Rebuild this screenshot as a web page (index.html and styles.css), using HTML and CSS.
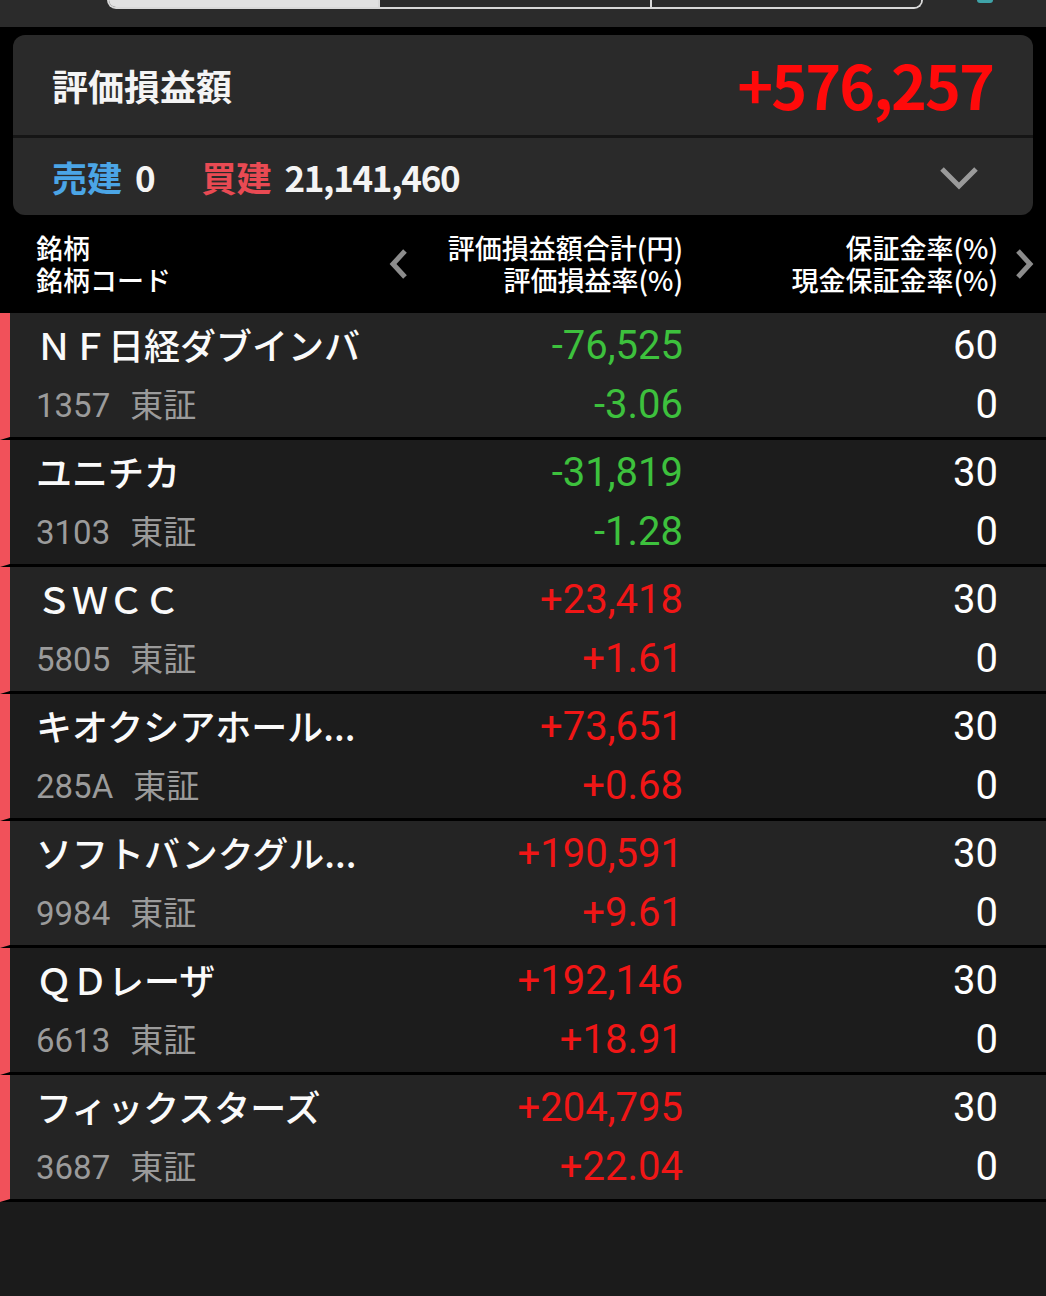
FILE: index.html
```html
<!DOCTYPE html>
<html lang="ja">
<head>
<meta charset="utf-8">
<title>建玉一覧</title>
<link rel="stylesheet" href="styles.css">
</head>
<body>
<div class="topbar">
  <div class="segments">
    <div class="seg seg-active"></div>
    <div class="seg"></div>
    <div class="seg"></div>
  </div>
  <div class="topicon"></div>
</div>
<div class="upper">
  <div class="card">
    <div class="card-top">
      <span class="card-label">評価損益額</span>
      <span class="card-total">+576,257</span>
    </div>
    <div class="card-bottom">
      <div class="pos">
        <span class="sell">売建</span><span class="pos-num">0</span>
        <span class="buy">買建</span><span class="pos-num">21,141,460</span>
      </div>
      <svg class="chev-down" width="40" height="24" viewBox="0 0 40 24"><path d="M3 3 L20 20 L37 3" fill="none" stroke="#9a9a9a" stroke-width="5" stroke-linejoin="miter"/></svg>
    </div>
  </div>
  <div class="thead">
    <div class="th th-name">
      <div class="th-lines"><div>銘柄</div><div>銘柄コード</div></div>
      <svg class="chev" width="20" height="30" viewBox="0 0 20 30"><path d="M16 2 L4 15 L16 28" fill="none" stroke="#8c8c8c" stroke-width="5"/></svg>
    </div>
    <div class="th th-r"><div>評価損益額合計(円)</div><div>評価損益率(%)</div></div>
    <div class="th th-r"><div>保証金率(%)</div><div>現金保証金率(%)</div></div>
    <div class="th th-next">
      <svg class="chev" width="20" height="30" viewBox="0 0 20 30"><path d="M4 2 L16 15 L4 28" fill="none" stroke="#8c8c8c" stroke-width="5"/></svg>
    </div>
  </div>
</div>
<div class="list">
  <div class="row">
    <div class="cell-name"><div class="name">ＮＦ日経ダブインバ</div><div class="code">1357<span class="mkt">東証</span></div></div>
    <div class="cell-num minus"><div>-76,525</div><div>-3.06</div></div>
    <div class="cell-num"><div>60</div><div>0</div></div>
  </div>
  <div class="row">
    <div class="cell-name"><div class="name">ユニチカ</div><div class="code">3103<span class="mkt">東証</span></div></div>
    <div class="cell-num minus"><div>-31,819</div><div>-1.28</div></div>
    <div class="cell-num"><div>30</div><div>0</div></div>
  </div>
  <div class="row">
    <div class="cell-name"><div class="name">ＳＷＣＣ</div><div class="code">5805<span class="mkt">東証</span></div></div>
    <div class="cell-num plus"><div>+23,418</div><div>+1.61</div></div>
    <div class="cell-num"><div>30</div><div>0</div></div>
  </div>
  <div class="row">
    <div class="cell-name"><div class="name">キオクシアホール...</div><div class="code">285A<span class="mkt">東証</span></div></div>
    <div class="cell-num plus"><div>+73,651</div><div>+0.68</div></div>
    <div class="cell-num"><div>30</div><div>0</div></div>
  </div>
  <div class="row">
    <div class="cell-name"><div class="name">ソフトバンクグル...</div><div class="code">9984<span class="mkt">東証</span></div></div>
    <div class="cell-num plus"><div>+190,591</div><div>+9.61</div></div>
    <div class="cell-num"><div>30</div><div>0</div></div>
  </div>
  <div class="row">
    <div class="cell-name"><div class="name">ＱＤレーザ</div><div class="code">6613<span class="mkt">東証</span></div></div>
    <div class="cell-num plus"><div>+192,146</div><div>+18.91</div></div>
    <div class="cell-num"><div>30</div><div>0</div></div>
  </div>
  <div class="row">
    <div class="cell-name"><div class="name">フィックスターズ</div><div class="code">3687<span class="mkt">東証</span></div></div>
    <div class="cell-num plus"><div>+204,795</div><div>+22.04</div></div>
    <div class="cell-num"><div>30</div><div>0</div></div>
  </div>
</div>
</body>
</html>
```
FILE: styles.css
```css
* { box-sizing: border-box; }
html, body { margin: 0; padding: 0; }
body {
  background: #1b1b1b;
  color: #fff;
  font-family: "Noto Sans CJK JP", "Noto Sans", sans-serif;
  width: 1046px;
  min-height: 1296px;
}
.topbar {
  height: 27px;
  background: #2b2b2b;
  display: flex;
  align-items: flex-start;
}
.segments {
  margin-left: 107px;
  width: 816px;
  height: 9px;
  display: flex;
  border: 2px solid #d8d8d8;
  border-top: none;
  border-radius: 0 0 10px 10px;
  overflow: hidden;
}
.seg { flex: 1; background: #2b2b2b; border-left: 2px solid #d8d8d8; }
.seg:first-child { border-left: none; }
.seg-active { background: #e1e1e1; }
.topicon {
  margin-left: 54px;
  width: 16px;
  height: 3px;
  background: #3fa3a8;
  border-radius: 0 0 6px 6px;
}
.upper {
  background: #000;
  padding-top: 8px;
}
.card {
  margin: 0 13px;
  height: 180px;
  background: #2a2a2a;
  border-radius: 12px;
  display: flex;
  flex-direction: column;
  overflow: hidden;
}
.card-top {
  height: 103px;
  display: flex;
  align-items: center;
  justify-content: space-between;
  padding: 0 40px 0 39px;
  border-bottom: 3px solid #151515;
}
.card-label {
  font-size: 36px;
  font-weight: 700;
  color: #f4f4f4;
}
.card-total {
  font-size: 61px;
  font-weight: 700;
  color: #ff0a0a;
  letter-spacing: -2px;
  line-height: 1;
  padding-bottom: 4px;
}
.card-bottom {
  flex: 1;
  display: flex;
  align-items: center;
  justify-content: space-between;
  padding: 0 54px 0 39px;
}
.pos { font-size: 35px; font-weight: 700; display: flex; align-items: baseline; }
.sell { color: #4ba5e6; }
.buy { color: #e94a53; margin-left: 47px; }
.pos-num { color: #f4f4f4; margin-left: 13px; letter-spacing: -1.3px; }
.chev-down { display: block; margin-top: 2px; }
.thead {
  height: 98px;
  display: grid;
  grid-template-columns: 1fr 243px 315px 48px;
  align-items: center;
  padding-left: 36px;
}
.th { font-size: 27px; font-weight: 500; line-height: 32px; color: #fff; }
.th-name { display: flex; align-items: center; justify-content: space-between; padding-right: 31px; }
.th-r { text-align: right; }
.th-next { display: flex; align-items: center; padding-left: 16px; }
.chev { display: block; }
.list { background: #1b1b1b; }
.row {
  display: grid;
  grid-template-columns: 1fr 243px 315px 48px;
  height: 127px;
  border-bottom: 3px solid #000;
  border-left: 10px solid #f1515a;
  padding: 8px 0 0 26px;
  background: #242424;
}
.row:nth-child(even) { background: #1c1c1c; }
.cell-name, .cell-num { display: flex; flex-direction: column; gap: 9px; }
.cell-name > div, .cell-num > div { height: 50px; line-height: 50px; white-space: nowrap; }
.cell-name { padding-top: 0; margin-top: -2px; }
.name { font-size: 36px; font-weight: 500; color: #fafafa; }
.code {
  font-family: Roboto, "Noto Sans CJK JP", sans-serif;
  font-size: 33px;
  color: #9b9b9b;
}
.mkt { margin-left: 20px; font-family: "Noto Sans CJK JP", sans-serif; }
.cell-num {
  text-align: right;
  font-family: Roboto, "Noto Sans", sans-serif;
  font-size: 40px;
  color: #fff;
}
.minus { color: #3dc13d; }
.plus { color: #f01616; }
```
